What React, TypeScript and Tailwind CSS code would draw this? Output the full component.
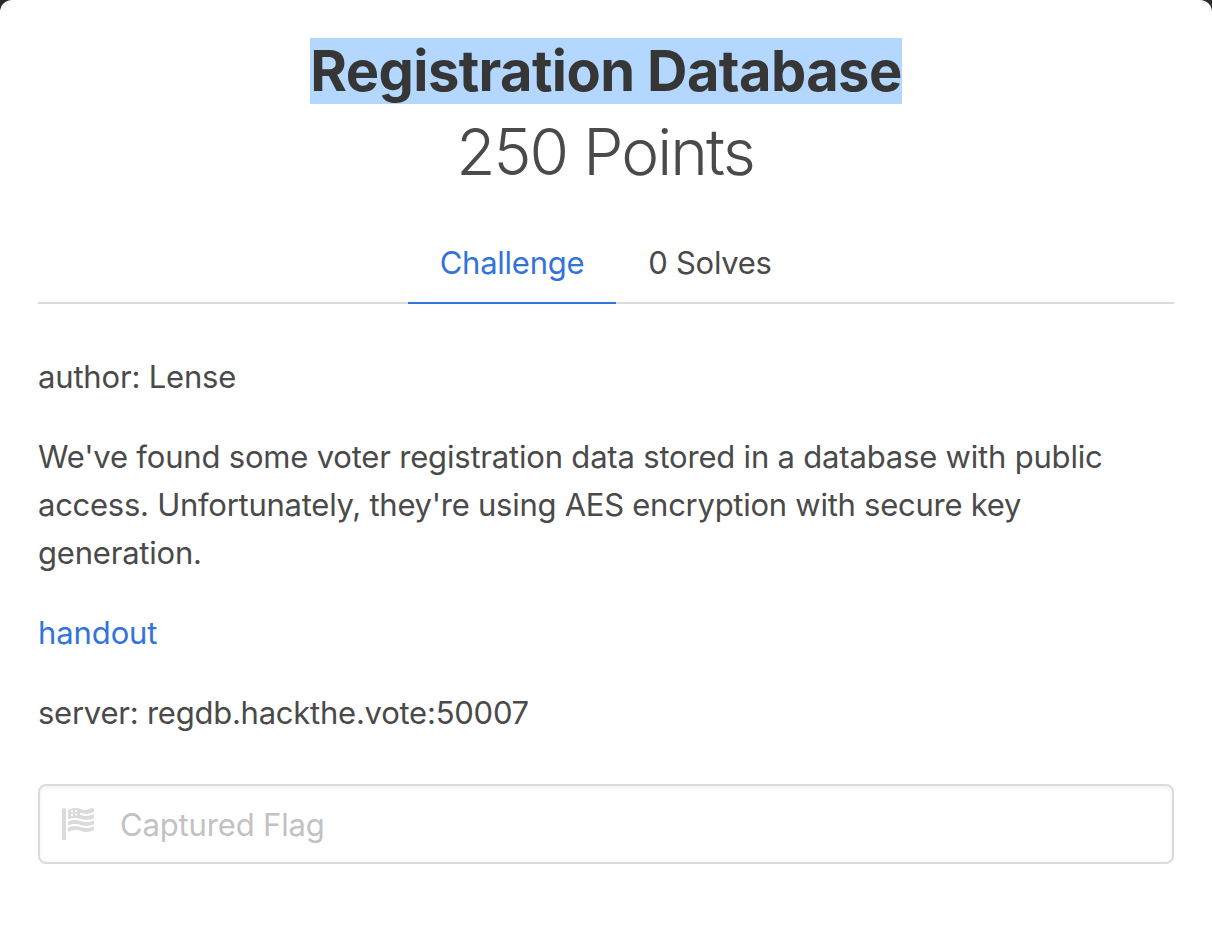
import { FaFlagUsa } from "react-icons/fa";

export default function App() {
  return (
    <div className="h-[936px] w-[1212px] overflow-hidden bg-[#2b292b] font-['Inter',sans-serif] text-[31px] leading-[48px] text-[#4a4a4a]">
      <main className="flex h-full flex-col rounded-t-[12px] bg-white px-[38px]">
        <header className="flex flex-col items-center pt-[38px]">
          <h1 className="flex h-[66px] w-[592px] items-center justify-center whitespace-nowrap bg-[#b3d7ff] text-[56px] font-bold leading-[66px] tracking-[-0.6px] text-[#363636]">
            <span>Registration Database</span>
          </h1>
          <h2 className="mt-[12px] h-[72px] whitespace-nowrap pr-0.5 text-[64px] font-light leading-[72px] tracking-[-1.9px]">250 Points</h2>
        </header>
        <nav className="mt-[36px] flex h-[80px] justify-center border-b-2 border-[#dbdbdb]">
          <a className="flex h-[80px] w-[208px] items-center justify-center border-b-2 border-[#3273dc] pb-px tracking-[-0.25px] text-[#3273dc]"><span>Challenge</span></a>
          <a className="flex h-[80px] w-[188px] items-center justify-center border-b-2 border-[#dbdbdb] pb-px tracking-[-0.3px]"><span>0 Solves</span></a>
        </nav>
        <section className="mt-[49px] flex flex-col gap-8">
          <p className="tracking-[-0.18px]"><span>author: Lense</span></p>
          <p>
            <span className="tracking-[-0.19px]">We've found some voter registration data stored in a database with public</span><br />
            <span className="tracking-[-0.26px]">access. Unfortunately, they're using AES encryption with secure key</span><br />
            <span className="tracking-[-0.2px]">generation.</span>
          </p>
          <p><a className="tracking-[-0.1px] text-[#3273dc]">handout</a></p>
          <p className="tracking-[-0.24px]"><span>server: regdb.hackthe.vote:50007</span></p>
        </section>
        <div className="mt-[47px] flex h-[80px] items-center rounded-[8px] border-2 border-[#dbdbdb] pl-[22px] text-[#c2c2c2] shadow-[inset_0_2px_4px_rgba(10,10,10,0.06)]">
          <FaFlagUsa className="size-8 text-[#dbdbdb]" />
          <span className="ml-[26px] pt-0.5 tracking-[-0.15px]">Captured Flag</span>
        </div>
      </main>
    </div>
  );
}
